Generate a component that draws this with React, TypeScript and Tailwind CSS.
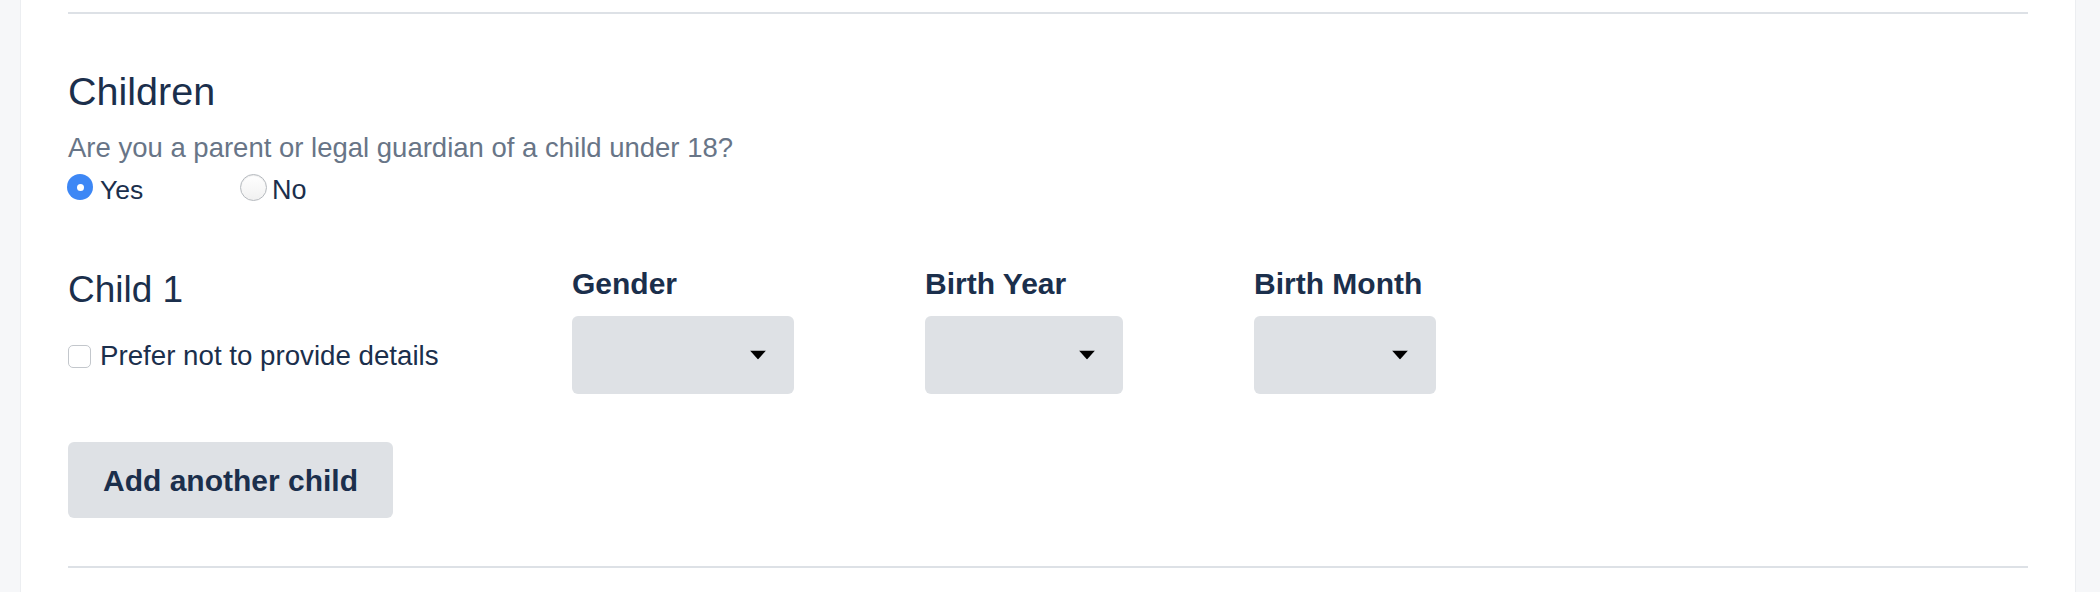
const selects = [
  { label: "Gender", width: "w-[222px]" },
  { label: "Birth Year", width: "w-[198px]" },
  { label: "Birth Month", width: "w-[182px]" },
]

function Caret() {
  return (
    <svg width="16" height="9" viewBox="0 0 16 9" className="absolute right-[28px] top-1/2 -translate-y-1/2">
      <path d="M0 0 H16 L8 9 Z" fill="#000" />
    </svg>
  )
}

export default function App() {
  return (
    <div
      className="min-h-screen flex bg-[#f6f7f9] text-[#1b2f4c]"
      style={{ fontFamily: '"Liberation Sans", Arial, sans-serif' }}
    >
      <div className="flex-1 ml-[20px] mr-[24px] bg-white border-x border-[#eceef1] px-[47px] pt-[12px]">
        <div className="h-[2px] bg-[#dde1e6]" />

        <h2 className="mt-[54px] text-[39.5px] leading-[47px] font-normal">Children</h2>
        <p className="mt-[15px] text-[27.5px] leading-[36px] text-[#687587]">
          Are you a parent or legal guardian of a child under 18?
        </p>

        <div className="mt-[6px] flex items-start">
          <label className="w-[173px] flex items-start gap-[7px] -ml-[1px]">
            <span className="mt-[2px] w-[26px] h-[26px] rounded-full bg-[#3d87f5] flex items-center justify-center">
              <span className="w-[7px] h-[7px] rounded-full bg-white" />
            </span>
            <span className="text-[26.5px] leading-[36px]">Yes</span>
          </label>
          <label className="flex items-start gap-[5px]">
            <span className="mt-[2px] w-[27px] h-[27px] rounded-full border border-[#b5b9be] bg-gradient-to-b from-white to-[#f1f1f1] shadow-[inset_0_1px_1px_rgba(0,0,0,0.08)]" />
            <span className="text-[27px] leading-[36px]">No</span>
          </label>
        </div>

        <div className="mt-[58px] flex items-start">
          <div className="w-[504px] pt-[2px]">
            <h3 className="text-[37px] leading-[44px] font-normal">Child 1</h3>
            <label className="mt-[26px] flex items-center gap-[9px]">
              <span className="w-[23px] h-[23px] rounded-[5px] border-[1.5px] border-[#c3c7cc] bg-white" />
              <span className="text-[27.7px] leading-[36px]">Prefer not to provide details</span>
            </label>
          </div>

          <div className="flex gap-[131px]">
            {selects.map((s) => (
              <div key={s.label}>
                <div className="text-[30px] leading-[36px] font-bold">{s.label}</div>
                <div className={`relative mt-[14px] h-[78px] rounded-[6px] bg-[#dee1e5] ${s.width}`}>
                  <Caret />
                </div>
              </div>
            ))}
          </div>
        </div>

        <button className="mt-[48px] h-[76px] px-[35px] rounded-[6px] bg-[#dee1e5] text-[30px] font-bold">
          Add another child
        </button>

        <div className="mt-[48px] h-[2px] bg-[#dde1e6]" />
      </div>
    </div>
  )
}
